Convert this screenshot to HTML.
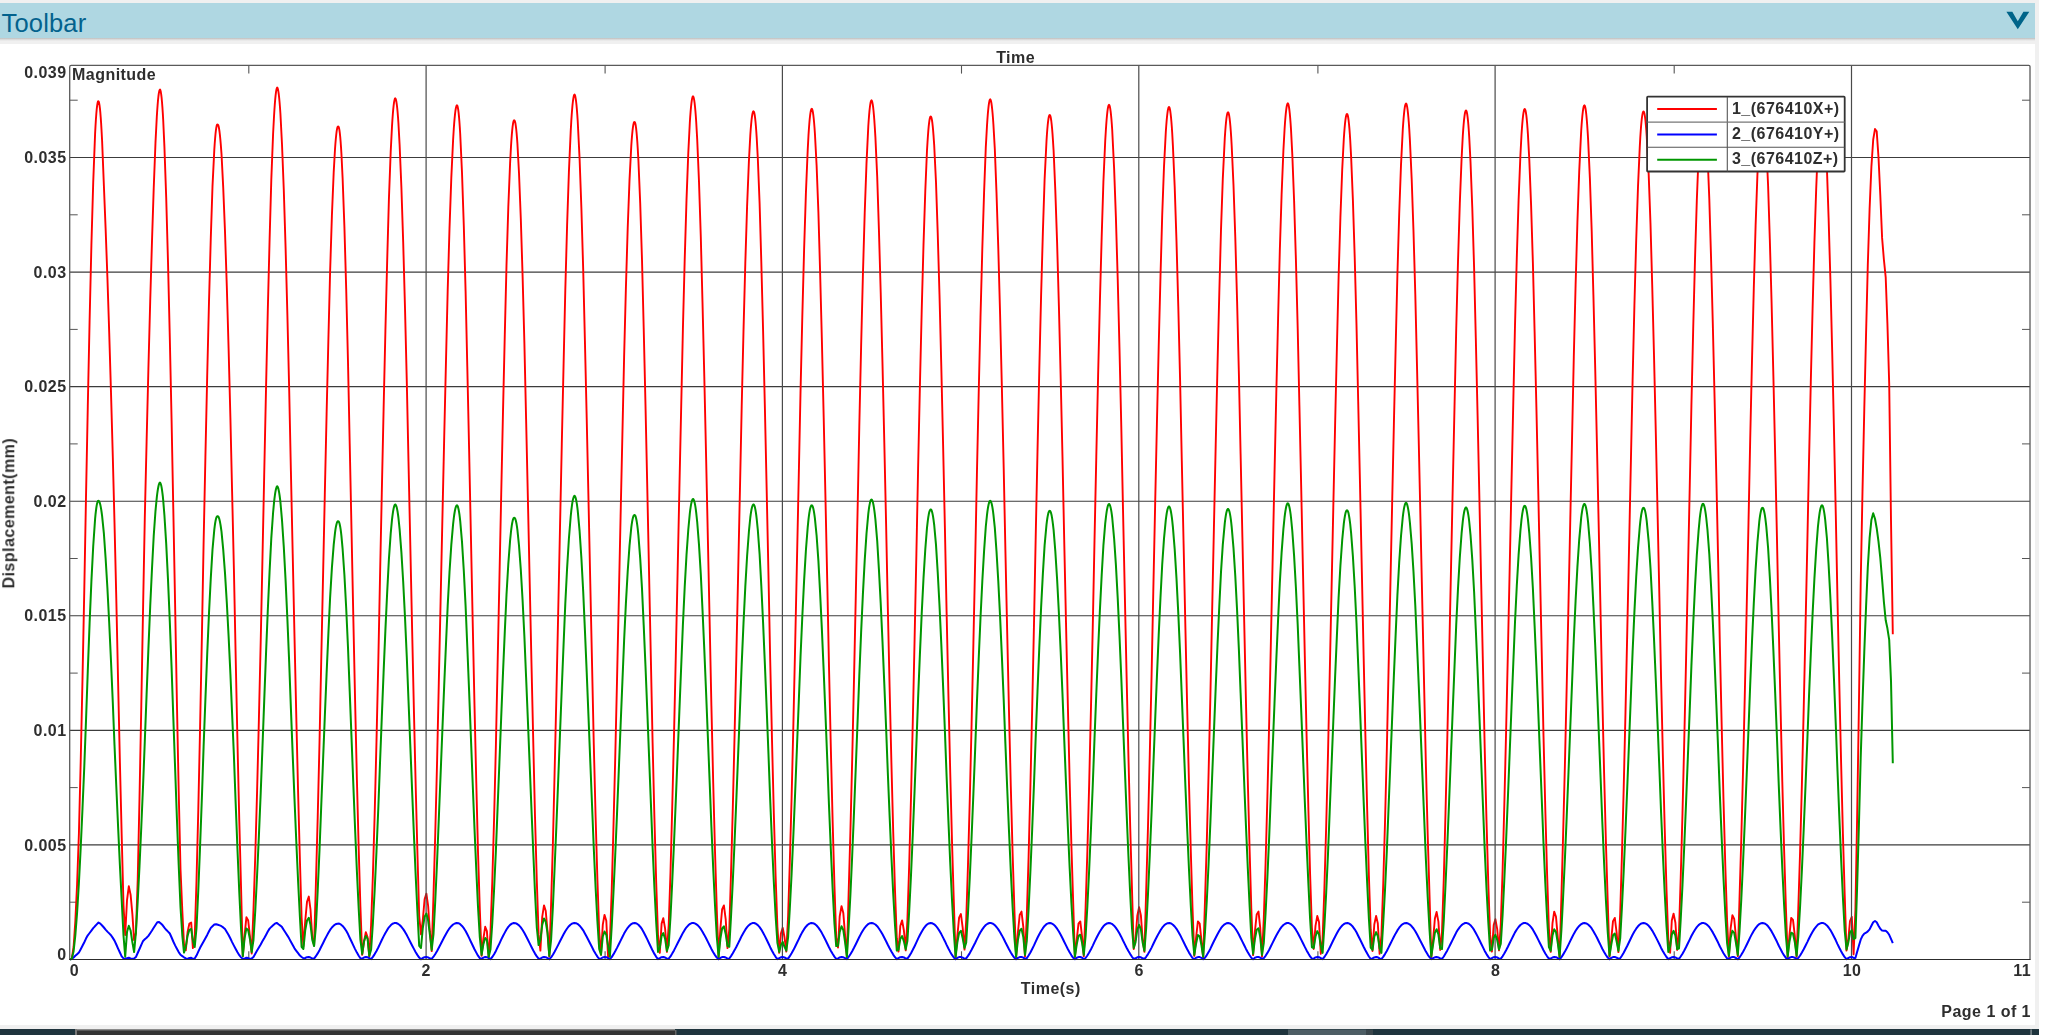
<!DOCTYPE html>
<html><head><meta charset="utf-8"><title>Chart</title>
<style>
html,body{margin:0;padding:0;background:#fff;}
body{width:2047px;height:1035px;overflow:hidden;position:relative;font-family:"Liberation Sans",sans-serif;}
#tb{position:absolute;left:0;top:3px;width:2035px;height:35.2px;background:#afd7e2;}
#sh{position:absolute;left:0;top:38.2px;width:2035px;height:2.6px;background:linear-gradient(#bdbdbd,#d9d9d9 45%,#f0f0f0);}
#tb span{position:absolute;left:1.6px;top:4.5px;font-size:25.5px;line-height:30px;color:#03628d;letter-spacing:0.15px;}
.g{position:absolute;background:#f0f0f0;}
svg{position:absolute;left:0;top:0;}
text{font-family:"Liberation Sans",sans-serif;font-weight:bold;font-size:16px;fill:#2e2e2e;letter-spacing:0.47px;}
</style></head><body>
<div class="g" style="left:0;top:0;width:2039px;height:3px"></div>
<div class="g" style="left:0;top:38.5px;width:2039px;height:5.5px"></div>
<div class="g" style="left:2035px;top:0;width:4px;height:1029px"></div>
<div class="g" style="left:0;top:1025px;width:2039px;height:4px"></div>
<div id="tb"><span>Toolbar</span></div><div id="sh"></div>
<svg width="2047" height="1035" viewBox="0 0 2047 1035">
<polygon points="2006.4,11.7 2012.3,11.7 2017.8,21.3 2023.4,11.7 2029.3,11.7 2017.8,29.3" fill="#006489"/>
<rect x="0" y="1029" width="2039" height="6" fill="#1f343d"/>
<rect x="77" y="1029" width="598" height="6" fill="#333"/>
<rect x="77" y="1029" width="598" height="1" fill="#8c8c8c"/>
<rect x="77" y="1030" width="598" height="1" fill="#595959"/>
<rect x="75" y="1029" width="2" height="6" fill="#777"/>
<rect x="675" y="1030" width="1.5" height="5" fill="#666"/>
<rect x="1288" y="1029.5" width="78" height="5.5" fill="#4d5d64"/>
<rect x="1366" y="1029.5" width="7" height="5.5" fill="#3a464b"/>
<rect x="2030.3" y="1029.5" width="1.6" height="5.5" fill="#7b878b"/>
<line x1="69.7" y1="844.9" x2="2030.0" y2="844.9" stroke="#3c3c3c" stroke-width="1.1"/>
<line x1="69.7" y1="730.4" x2="2030.0" y2="730.4" stroke="#3c3c3c" stroke-width="1.1"/>
<line x1="69.7" y1="615.8" x2="2030.0" y2="615.8" stroke="#3c3c3c" stroke-width="1.1"/>
<line x1="69.7" y1="501.2" x2="2030.0" y2="501.2" stroke="#3c3c3c" stroke-width="1.1"/>
<line x1="69.7" y1="386.6" x2="2030.0" y2="386.6" stroke="#3c3c3c" stroke-width="1.1"/>
<line x1="69.7" y1="272.1" x2="2030.0" y2="272.1" stroke="#3c3c3c" stroke-width="1.1"/>
<line x1="69.7" y1="157.5" x2="2030.0" y2="157.5" stroke="#3c3c3c" stroke-width="1.1"/>
<line x1="69.7" y1="902.2" x2="77.7" y2="902.2" stroke="#555" stroke-width="1"/>
<line x1="2022.0" y1="902.2" x2="2030.0" y2="902.2" stroke="#555" stroke-width="1"/>
<line x1="69.7" y1="787.6" x2="77.7" y2="787.6" stroke="#555" stroke-width="1"/>
<line x1="2022.0" y1="787.6" x2="2030.0" y2="787.6" stroke="#555" stroke-width="1"/>
<line x1="69.7" y1="673.1" x2="77.7" y2="673.1" stroke="#555" stroke-width="1"/>
<line x1="2022.0" y1="673.1" x2="2030.0" y2="673.1" stroke="#555" stroke-width="1"/>
<line x1="69.7" y1="558.5" x2="77.7" y2="558.5" stroke="#555" stroke-width="1"/>
<line x1="2022.0" y1="558.5" x2="2030.0" y2="558.5" stroke="#555" stroke-width="1"/>
<line x1="69.7" y1="443.9" x2="77.7" y2="443.9" stroke="#555" stroke-width="1"/>
<line x1="2022.0" y1="443.9" x2="2030.0" y2="443.9" stroke="#555" stroke-width="1"/>
<line x1="69.7" y1="329.4" x2="77.7" y2="329.4" stroke="#555" stroke-width="1"/>
<line x1="2022.0" y1="329.4" x2="2030.0" y2="329.4" stroke="#555" stroke-width="1"/>
<line x1="69.7" y1="214.8" x2="77.7" y2="214.8" stroke="#555" stroke-width="1"/>
<line x1="2022.0" y1="214.8" x2="2030.0" y2="214.8" stroke="#555" stroke-width="1"/>
<line x1="69.7" y1="100.2" x2="77.7" y2="100.2" stroke="#555" stroke-width="1"/>
<line x1="2022.0" y1="100.2" x2="2030.0" y2="100.2" stroke="#555" stroke-width="1"/>
<line x1="248.8" y1="65.4" x2="248.8" y2="73.60000000000001" stroke="#555" stroke-width="1.1"/>
<line x1="248.8" y1="951.3" x2="248.8" y2="959.5" stroke="#555" stroke-width="1.1"/>
<line x1="605.1" y1="65.4" x2="605.1" y2="73.60000000000001" stroke="#555" stroke-width="1.1"/>
<line x1="605.1" y1="951.3" x2="605.1" y2="959.5" stroke="#555" stroke-width="1.1"/>
<line x1="961.5" y1="65.4" x2="961.5" y2="73.60000000000001" stroke="#555" stroke-width="1.1"/>
<line x1="961.5" y1="951.3" x2="961.5" y2="959.5" stroke="#555" stroke-width="1.1"/>
<line x1="1317.9" y1="65.4" x2="1317.9" y2="73.60000000000001" stroke="#555" stroke-width="1.1"/>
<line x1="1317.9" y1="951.3" x2="1317.9" y2="959.5" stroke="#555" stroke-width="1.1"/>
<line x1="1674.2" y1="65.4" x2="1674.2" y2="73.60000000000001" stroke="#555" stroke-width="1.1"/>
<line x1="1674.2" y1="951.3" x2="1674.2" y2="959.5" stroke="#555" stroke-width="1.1"/>
<polyline fill="none" stroke="#ff0000" stroke-width="1.9" stroke-linejoin="round" points="70.0,959.5 71.8,958.7 73.6,946.7 75.3,921.6 77.1,884.1 78.9,833.8 80.7,761.7 82.5,679.0 84.3,589.3 86.0,496.9 87.8,406.0 89.6,320.7 91.4,245.2 93.2,182.9 95.1,133.6 95.5,126.1 95.9,119.5 96.3,114.0 96.7,109.4 97.1,105.8 97.5,103.3 97.9,101.7 98.3,101.2 98.7,101.6 99.1,102.9 99.5,105.1 99.9,108.2 100.3,112.2 100.7,117.1 101.1,122.9 101.5,129.6 102.1,140.7 103.9,186.0 105.6,228.1 107.4,277.3 109.2,332.4 111.0,392.6 112.8,456.5 114.5,522.8 116.3,598.7 118.1,682.3 119.9,762.3 121.7,836.0 123.5,905.2 125.2,935.0 127.0,900.3 128.8,886.3 130.6,894.7 132.4,914.4 134.1,940.1 135.9,933.1 137.7,880.1 139.5,798.5 141.3,705.8 143.1,606.4 144.8,517.7 146.6,441.8 148.4,369.1 150.2,301.5 152.0,240.9 153.7,188.9 155.5,142.3 156.8,116.9 157.2,110.6 157.6,105.1 158.0,100.4 158.4,96.5 158.8,93.5 159.2,91.3 159.6,90.0 160.0,89.5 160.4,90.2 160.8,91.8 161.2,94.3 161.6,97.7 162.0,102.0 162.4,107.1 162.8,113.1 163.2,120.0 164.4,146.4 166.2,197.5 168.0,262.1 169.8,337.6 171.6,421.0 173.3,509.1 175.1,604.3 176.9,701.9 178.7,791.6 180.5,869.3 182.3,910.6 184.0,944.2 185.8,950.3 187.6,931.9 189.4,923.5 191.2,922.6 192.9,948.1 194.7,937.2 196.5,881.0 198.3,809.7 200.1,726.7 201.9,635.9 203.6,542.9 205.4,457.3 207.2,375.8 209.0,301.6 210.8,237.6 212.5,186.2 214.3,149.9 214.7,143.8 215.1,138.5 215.5,134.0 215.9,130.4 216.3,127.6 216.7,125.7 217.1,124.7 217.5,124.5 217.9,124.6 218.3,125.3 218.7,126.7 219.1,128.8 219.5,131.5 219.9,134.8 220.3,138.8 220.7,143.4 221.5,153.9 223.2,187.1 225.0,231.6 226.8,286.0 228.6,348.7 230.4,417.8 232.1,491.4 233.9,568.9 235.7,658.2 237.5,743.5 239.3,821.3 241.1,889.6 242.8,956.1 244.6,935.2 246.4,917.3 248.2,920.5 250.0,937.0 251.7,953.5 253.5,909.0 255.3,854.8 257.1,790.9 258.9,719.2 260.7,641.9 262.4,561.6 264.2,474.8 266.0,389.7 267.8,310.3 269.6,239.5 271.3,179.9 273.1,133.8 274.0,116.7 274.4,110.1 274.8,104.4 275.2,99.4 275.6,95.4 276.0,92.1 276.4,89.7 276.8,88.2 277.2,87.5 277.6,88.1 278.0,89.5 278.4,91.6 278.8,94.5 279.2,98.1 279.6,102.5 280.0,107.5 280.4,113.3 282.0,144.2 283.8,190.3 285.6,248.1 287.4,315.5 289.2,390.6 290.9,470.9 292.7,553.8 294.5,636.7 296.3,717.1 298.1,792.2 299.9,859.8 301.6,917.8 303.4,946.1 305.2,921.3 307.0,901.8 308.8,896.6 310.5,909.5 312.3,937.4 314.1,945.1 315.9,883.9 317.7,817.6 319.5,742.8 321.2,662.2 323.0,578.5 324.8,494.8 326.6,414.0 328.4,338.9 330.1,272.1 331.9,215.9 333.7,172.3 335.0,149.3 335.4,143.8 335.8,139.0 336.2,135.0 336.6,131.7 337.0,129.2 337.4,127.5 337.8,126.6 338.2,126.5 338.6,126.8 339.0,127.9 339.4,129.9 339.8,132.9 340.2,136.7 340.6,141.3 341.0,146.9 341.4,153.3 342.6,177.8 344.4,226.6 346.2,289.0 348.0,362.3 349.7,443.5 351.5,529.4 353.3,616.4 355.1,700.9 356.9,779.5 358.7,849.0 360.4,906.6 362.2,954.9 364.0,942.0 365.8,932.1 367.6,937.3 369.3,956.8 371.1,925.0 372.9,875.1 374.7,813.0 376.5,741.1 378.3,661.7 380.0,578.0 381.8,492.8 383.6,409.5 385.4,330.9 387.2,260.1 388.9,199.6 390.7,151.8 392.0,126.4 392.4,120.0 392.8,114.5 393.2,109.7 393.6,105.8 394.0,102.7 394.4,100.4 394.8,98.9 395.2,98.3 395.6,98.7 396.0,99.9 396.4,101.8 396.8,104.5 397.2,107.9 397.6,112.1 398.0,117.0 398.4,122.7 399.6,144.5 401.4,187.5 403.2,242.6 405.0,308.1 406.8,382.0 408.5,461.7 410.3,544.8 412.1,628.4 413.9,709.9 415.7,786.6 417.5,856.0 419.2,915.8 421.0,934.3 422.8,920.0 424.6,899.4 426.4,893.6 428.1,905.6 429.9,931.7 431.7,951.1 433.5,895.2 435.3,832.3 437.1,760.8 438.8,682.9 440.6,601.3 442.4,518.6 444.2,437.4 446.0,360.4 447.7,290.1 449.5,228.6 451.3,178.1 453.1,140.0 453.8,128.5 454.2,123.1 454.6,118.3 455.0,114.3 455.4,111.0 455.8,108.5 456.2,106.7 456.6,105.6 457.0,105.3 457.4,105.8 457.8,107.3 458.2,109.5 458.6,112.7 459.0,116.7 459.4,121.5 459.8,127.2 460.2,133.7 462.0,172.6 463.8,225.8 465.6,291.4 467.3,366.8 469.1,449.2 470.9,535.3 472.7,621.9 474.5,705.7 476.3,783.3 478.0,852.0 479.8,909.1 481.6,955.8 483.4,938.6 485.2,926.8 486.9,931.1 488.7,957.8 490.5,931.7 492.3,881.2 494.1,818.2 495.9,745.2 497.6,664.8 499.4,580.3 501.2,494.9 503.0,411.8 504.8,334.3 506.5,265.3 508.3,207.5 510.1,163.1 511.0,146.4 511.4,140.3 511.8,134.9 512.2,130.4 512.6,126.7 513.0,123.8 513.4,121.8 513.8,120.6 514.2,120.3 514.6,120.5 515.0,121.5 515.4,123.2 515.8,125.8 516.2,129.0 516.6,133.1 517.0,137.9 517.4,143.4 519.0,173.0 520.8,218.5 522.6,276.1 524.4,343.6 526.1,418.9 527.9,499.4 529.7,582.2 531.5,664.5 533.3,743.6 535.0,816.5 536.8,880.9 538.6,934.4 540.4,950.6 542.2,917.2 544.0,905.4 545.7,910.7 547.5,931.1 549.3,956.6 551.1,904.0 552.9,843.5 554.6,773.0 556.4,695.2 558.2,612.5 560.0,527.8 561.8,443.9 563.6,363.8 565.3,290.2 567.1,225.5 568.9,172.1 570.7,131.6 571.3,120.9 571.7,114.9 572.1,109.7 572.5,105.2 572.9,101.5 573.3,98.6 573.7,96.4 574.1,95.1 574.5,94.5 574.9,95.1 575.3,96.4 575.7,98.6 576.1,101.5 576.5,105.2 576.9,109.7 577.3,114.9 577.7,120.8 579.6,158.9 581.4,208.5 583.2,269.6 584.9,340.3 586.7,418.0 588.5,500.1 590.3,583.8 592.1,666.4 593.8,744.9 595.6,816.8 597.4,879.6 599.2,931.2 601.0,954.8 602.8,924.6 604.5,914.9 606.3,920.8 608.1,957.1 609.9,940.8 611.7,891.1 613.4,829.8 615.2,759.0 617.0,681.2 618.8,599.2 620.6,516.0 622.4,434.5 624.1,357.6 625.9,288.1 627.7,228.3 629.5,180.4 631.3,145.6 631.7,139.9 632.1,135.0 632.5,130.9 632.9,127.6 633.3,125.0 633.7,123.2 634.1,122.2 634.5,122.0 634.9,122.3 635.3,123.4 635.7,125.3 636.1,128.1 636.5,131.8 636.9,136.3 637.3,141.6 637.7,147.7 638.4,160.3 640.2,203.1 642.0,259.7 643.7,328.1 645.5,405.4 647.3,488.8 649.1,575.0 650.9,660.7 652.6,742.6 654.4,817.5 656.2,882.6 658.0,935.2 659.8,952.9 661.6,923.6 663.3,918.1 665.1,928.6 666.9,951.9 668.7,925.1 670.5,872.3 672.2,808.3 674.0,735.4 675.8,655.9 677.6,572.7 679.4,488.6 681.2,406.5 682.9,329.3 684.7,259.7 686.5,200.1 688.3,152.6 689.8,123.0 690.2,116.9 690.6,111.6 691.0,107.1 691.4,103.4 691.8,100.4 692.2,98.2 692.6,96.9 693.0,96.3 693.4,96.8 693.8,98.1 694.2,100.1 694.6,102.9 695.0,106.5 695.4,110.8 695.8,115.9 696.2,121.8 697.2,139.4 699.0,181.9 700.8,236.9 702.5,302.5 704.3,376.7 706.1,456.9 707.9,540.3 709.7,624.3 711.4,705.9 713.2,782.4 715.0,851.3 716.8,910.2 718.6,957.1 720.4,928.3 722.1,909.5 723.9,905.4 725.7,919.3 727.5,948.1 729.3,929.1 731.0,874.0 732.8,808.3 734.6,734.0 736.4,653.9 738.2,570.7 740.0,487.2 741.7,406.4 743.5,330.9 745.3,263.5 747.1,206.3 748.9,161.4 750.3,135.2 750.7,129.5 751.1,124.6 751.5,120.5 751.9,117.1 752.3,114.5 752.7,112.7 753.1,111.6 753.5,111.3 753.9,111.7 754.3,112.9 754.7,115.0 755.1,117.9 755.5,121.6 755.9,126.2 756.3,131.5 756.7,137.6 757.8,158.0 759.6,203.3 761.3,261.7 763.1,330.9 764.9,408.3 766.7,491.0 768.5,575.9 770.2,659.9 772.0,739.8 773.8,812.7 775.6,875.8 777.4,926.8 779.2,952.9 780.9,933.5 782.7,927.8 784.5,937.3 786.3,951.6 788.1,916.4 789.8,862.8 791.6,797.8 793.4,723.6 795.2,643.0 797.0,559.0 798.8,474.6 800.5,392.9 802.3,317.1 804.1,249.7 805.9,193.4 807.7,150.3 808.5,135.1 808.9,129.0 809.3,123.7 809.7,119.2 810.1,115.5 810.5,112.6 810.9,110.5 811.3,109.2 811.7,108.8 812.1,109.1 812.5,110.3 812.9,112.2 813.3,114.8 813.7,118.3 814.1,122.5 814.5,127.5 814.9,133.2 816.6,165.2 818.4,212.4 820.1,271.7 821.9,340.9 823.7,417.8 825.5,499.7 827.3,583.7 829.0,667.0 830.8,746.6 832.6,819.9 834.4,884.1 836.2,937.2 838.0,947.6 839.7,916.4 841.5,906.1 843.3,912.9 845.1,935.5 846.9,957.1 848.6,894.9 850.4,831.9 852.2,759.3 854.0,679.5 855.8,595.5 857.6,510.1 859.3,426.4 861.1,347.2 862.9,275.3 864.7,213.3 866.5,163.4 868.3,126.3 868.7,120.3 869.1,115.1 869.5,110.6 869.9,107.0 870.3,104.1 870.7,102.0 871.1,100.8 871.5,100.3 871.9,100.8 872.3,102.1 872.7,104.1 873.1,106.9 873.5,110.5 873.9,114.8 874.3,119.9 874.7,125.7 875.4,137.1 877.2,176.8 878.9,229.1 880.7,292.2 882.5,364.1 884.3,442.2 886.1,523.9 887.8,606.4 889.6,686.9 891.4,762.8 893.2,831.5 895.0,890.6 896.8,938.2 898.5,951.6 900.3,926.0 902.1,920.4 903.9,930.5 905.7,950.4 907.4,920.3 909.2,864.8 911.0,797.7 912.8,721.5 914.6,639.2 916.4,553.7 918.1,468.4 919.9,386.5 921.7,311.1 923.5,245.0 925.3,190.7 927.0,150.2 927.5,142.3 927.9,136.2 928.3,130.9 928.7,126.4 929.1,122.8 929.5,120.0 929.9,118.0 930.3,116.8 930.7,116.5 931.1,116.8 931.5,117.9 931.9,119.7 932.3,122.4 932.7,125.9 933.1,130.1 933.5,135.1 933.9,140.9 934.2,145.3 936.0,182.2 937.7,232.6 939.5,294.8 941.3,366.4 943.1,445.0 944.9,527.8 946.6,611.8 948.4,693.9 950.2,771.4 952.0,841.3 953.8,901.2 955.6,957.1 957.3,936.3 959.1,917.7 960.9,914.0 962.7,927.9 964.5,949.6 966.2,920.3 968.0,865.0 969.8,798.8 971.6,724.0 973.4,643.2 975.2,559.1 976.9,474.9 978.7,393.3 980.5,317.2 982.3,249.3 984.1,191.9 985.8,147.1 987.0,125.6 987.4,119.6 987.8,114.3 988.2,109.8 988.6,106.2 989.0,103.2 989.4,101.1 989.8,99.8 990.2,99.3 990.6,99.8 991.0,101.0 991.4,103.0 991.8,105.8 992.2,109.3 992.6,113.5 993.0,118.5 993.4,124.2 994.8,148.8 996.5,192.8 998.3,248.8 1000.1,314.8 1001.9,388.7 1003.7,468.1 1005.4,550.2 1007.2,632.4 1009.0,712.0 1010.8,786.4 1012.6,853.0 1014.4,909.7 1016.1,957.1 1017.9,932.5 1019.7,915.0 1021.5,911.6 1023.3,926.8 1025.0,956.6 1026.8,915.9 1028.6,856.7 1030.4,786.5 1032.2,707.7 1034.0,623.5 1035.7,536.9 1037.5,451.3 1039.3,369.8 1041.1,295.6 1042.9,231.4 1044.6,179.6 1046.5,141.0 1046.9,134.8 1047.3,129.5 1047.7,125.0 1048.1,121.3 1048.5,118.5 1048.9,116.5 1049.3,115.3 1049.7,115.0 1050.1,115.3 1050.5,116.4 1050.9,118.3 1051.3,121.0 1051.7,124.5 1052.1,128.7 1052.5,133.7 1052.9,139.5 1053.6,150.5 1055.3,190.1 1057.1,242.6 1058.9,306.3 1060.7,378.7 1062.5,457.5 1064.2,539.7 1066.0,622.5 1067.8,703.0 1069.6,778.3 1071.4,845.7 1073.2,903.0 1074.9,957.1 1076.7,939.9 1078.5,923.7 1080.3,921.4 1082.1,937.2 1083.8,956.1 1085.6,907.6 1087.4,850.6 1089.2,782.9 1091.0,706.8 1092.8,625.0 1094.5,540.7 1096.3,456.6 1098.1,376.0 1099.9,301.6 1101.7,236.1 1103.4,182.0 1105.2,141.2 1105.8,131.2 1106.2,125.1 1106.6,119.8 1107.0,115.3 1107.4,111.6 1107.8,108.7 1108.2,106.6 1108.6,105.3 1109.0,104.8 1109.4,105.2 1109.8,106.4 1110.2,108.4 1110.6,111.1 1111.0,114.6 1111.4,118.9 1111.8,124.0 1112.2,129.8 1114.1,168.1 1115.9,217.4 1117.7,278.5 1119.5,349.1 1121.3,426.9 1123.0,509.3 1124.8,593.4 1126.6,676.2 1128.4,755.0 1130.2,827.1 1132.0,889.9 1133.7,949.0 1135.5,939.4 1137.3,915.7 1139.1,907.3 1140.9,915.5 1142.6,939.1 1144.4,951.9 1146.2,889.8 1148.0,826.5 1149.8,753.9 1151.6,674.6 1153.3,591.3 1155.1,506.8 1156.9,424.2 1158.7,346.4 1160.5,275.9 1162.2,215.4 1164.0,166.8 1165.8,132.0 1166.2,126.2 1166.6,121.1 1167.0,116.8 1167.4,113.3 1167.8,110.5 1168.2,108.6 1168.6,107.4 1169.0,107.0 1169.4,107.4 1169.8,108.7 1170.2,110.7 1170.6,113.6 1171.0,117.2 1171.4,121.6 1171.8,126.8 1172.2,132.7 1172.9,145.6 1174.7,186.9 1176.5,241.2 1178.3,306.6 1180.1,380.6 1181.8,460.8 1183.6,544.1 1185.4,627.7 1187.2,708.7 1189.0,784.0 1190.8,851.2 1192.5,907.7 1194.3,955.9 1196.1,937.5 1197.9,921.4 1199.7,923.6 1201.4,940.0 1203.2,957.8 1205.0,900.9 1206.8,842.1 1208.6,772.8 1210.4,695.5 1212.1,613.2 1213.9,528.6 1215.7,445.1 1217.5,365.5 1219.3,292.9 1221.0,229.8 1222.8,178.6 1224.8,137.9 1225.2,132.0 1225.6,126.7 1226.0,122.3 1226.4,118.7 1226.8,115.9 1227.2,113.9 1227.6,112.7 1228.0,112.3 1228.4,112.6 1228.8,113.8 1229.2,115.7 1229.6,118.4 1230.0,121.9 1230.4,126.2 1230.8,131.3 1231.2,137.1 1231.7,146.0 1233.5,185.2 1235.3,237.7 1237.1,301.5 1238.9,374.5 1240.6,454.0 1242.4,537.4 1244.2,621.5 1246.0,703.5 1247.8,780.4 1249.6,849.5 1251.3,908.4 1253.1,955.1 1254.9,931.7 1256.7,914.4 1258.5,911.6 1260.2,927.5 1262.0,956.6 1263.8,918.6 1265.6,862.7 1267.4,796.3 1269.2,721.5 1270.9,641.0 1272.7,557.6 1274.5,474.1 1276.3,393.4 1278.1,318.2 1279.8,251.2 1281.6,194.7 1283.4,150.5 1284.6,128.7 1285.0,122.8 1285.4,117.7 1285.8,113.4 1286.2,109.8 1286.6,107.0 1287.0,105.0 1287.4,103.8 1287.8,103.3 1288.2,103.8 1288.6,105.1 1289.0,107.1 1289.4,110.0 1289.8,113.7 1290.2,118.2 1290.6,123.4 1291.0,129.4 1292.3,154.5 1294.1,200.7 1295.9,259.3 1297.7,328.3 1299.4,405.3 1301.2,487.5 1303.0,572.0 1304.8,655.8 1306.6,736.0 1308.4,809.7 1310.1,874.3 1311.9,927.6 1313.7,949.0 1315.5,925.9 1317.3,915.9 1319.0,921.9 1320.8,953.9 1322.6,938.7 1324.4,888.3 1326.2,826.0 1328.0,754.1 1329.7,675.2 1331.5,592.0 1333.3,507.7 1335.1,425.3 1336.9,347.6 1338.6,277.6 1340.4,217.6 1342.2,169.9 1343.8,139.0 1344.2,133.1 1344.6,128.0 1345.0,123.7 1345.4,120.2 1345.8,117.4 1346.2,115.5 1346.6,114.3 1347.0,114.0 1347.4,114.3 1347.8,115.5 1348.2,117.5 1348.6,120.3 1349.0,124.0 1349.4,128.4 1349.8,133.7 1350.2,139.7 1351.1,156.4 1352.9,200.1 1354.7,257.0 1356.5,325.1 1358.2,401.8 1360.0,484.3 1361.8,569.5 1363.6,654.4 1365.4,735.7 1367.2,810.5 1368.9,876.0 1370.7,929.7 1372.5,951.0 1374.3,924.5 1376.1,915.9 1377.8,923.3 1379.6,953.9 1381.4,935.7 1383.2,885.0 1385.0,822.8 1386.8,751.1 1388.5,672.6 1390.3,589.8 1392.1,505.8 1393.9,423.4 1395.7,345.6 1397.4,274.9 1399.2,214.0 1401.0,165.0 1402.8,129.3 1403.2,123.4 1403.6,118.2 1404.0,113.8 1404.4,110.1 1404.8,107.3 1405.2,105.2 1405.6,104.0 1406.0,103.5 1406.4,103.9 1406.8,105.1 1407.2,107.1 1407.6,109.8 1408.0,113.3 1408.4,117.5 1408.8,122.4 1409.2,128.1 1409.9,140.1 1411.7,179.5 1413.5,231.5 1415.3,294.4 1417.0,366.0 1418.8,444.0 1420.6,525.7 1422.4,608.3 1424.2,689.2 1425.9,765.6 1427.7,835.0 1429.5,894.9 1431.3,957.4 1433.1,939.9 1434.9,918.5 1436.6,912.0 1438.4,921.6 1440.2,950.0 1442.0,931.8 1443.8,878.2 1445.5,813.1 1447.3,738.8 1449.1,658.2 1450.9,573.9 1452.7,489.2 1454.5,406.9 1456.2,330.1 1458.0,261.6 1459.8,203.6 1461.6,158.5 1462.8,135.8 1463.2,129.9 1463.6,124.7 1464.0,120.4 1464.4,116.8 1464.8,114.0 1465.2,112.0 1465.6,110.9 1466.0,110.5 1466.4,110.9 1466.8,112.1 1467.2,114.2 1467.6,117.1 1468.0,120.7 1468.4,125.2 1468.8,130.5 1469.2,136.6 1470.5,161.6 1472.3,208.3 1474.1,267.7 1475.8,337.7 1477.6,415.7 1479.4,498.7 1481.2,583.9 1483.0,668.0 1484.7,747.9 1486.5,820.8 1488.3,883.9 1490.1,934.9 1491.9,951.6 1493.7,925.1 1495.4,919.2 1497.2,929.2 1499.0,950.4 1500.8,924.0 1502.6,870.5 1504.3,805.6 1506.1,731.7 1507.9,651.4 1509.7,567.7 1511.5,483.4 1513.3,401.7 1515.0,325.4 1516.8,257.4 1518.6,200.1 1520.4,155.5 1521.5,134.8 1521.9,128.8 1522.3,123.6 1522.7,119.2 1523.1,115.5 1523.5,112.7 1523.9,110.6 1524.3,109.4 1524.7,109.0 1525.1,109.4 1525.5,110.5 1525.9,112.5 1526.3,115.2 1526.7,118.7 1527.1,123.0 1527.5,128.1 1527.9,133.9 1529.3,159.9 1531.1,205.4 1532.9,263.3 1534.6,331.4 1536.4,407.5 1538.2,488.8 1540.0,572.6 1541.8,655.9 1543.5,735.8 1545.3,809.5 1547.1,874.4 1548.9,928.3 1550.7,951.9 1552.5,923.2 1554.2,911.6 1556.0,916.8 1557.8,937.4 1559.6,957.8 1561.4,897.0 1563.1,835.8 1564.9,764.9 1566.7,686.6 1568.5,603.7 1570.3,519.2 1572.1,436.0 1573.8,357.0 1575.6,285.1 1577.4,222.6 1579.2,171.9 1581.0,134.6 1581.2,130.8 1581.6,124.9 1582.0,119.8 1582.4,115.4 1582.8,111.8 1583.2,109.0 1583.6,106.9 1584.0,105.7 1584.4,105.3 1584.8,105.7 1585.2,107.0 1585.6,109.0 1586.0,111.8 1586.4,115.5 1586.8,119.9 1587.2,125.0 1587.6,131.0 1588.1,139.3 1589.9,178.6 1591.7,231.1 1593.4,294.9 1595.2,367.9 1597.0,447.3 1598.8,530.4 1600.6,614.4 1602.3,696.1 1604.1,772.9 1605.9,841.8 1607.7,900.7 1609.5,956.6 1611.3,938.9 1613.0,921.1 1614.8,917.9 1616.6,932.5 1618.4,952.1 1620.2,913.3 1621.9,856.3 1623.7,788.4 1625.5,712.1 1627.3,630.0 1629.1,545.3 1630.9,461.0 1632.6,380.2 1634.4,305.7 1636.2,240.4 1638.0,186.7 1639.8,146.4 1640.3,137.2 1640.7,131.2 1641.1,125.9 1641.5,121.5 1641.9,117.9 1642.3,115.1 1642.7,113.1 1643.1,111.9 1643.5,111.5 1643.9,111.8 1644.3,113.0 1644.7,114.9 1645.1,117.6 1645.5,121.0 1645.9,125.3 1646.3,130.2 1646.7,136.0 1648.7,174.9 1650.5,224.1 1652.2,284.9 1654.0,355.2 1655.8,432.6 1657.6,514.3 1659.4,597.6 1661.1,679.5 1662.9,757.3 1664.7,828.1 1666.5,889.6 1668.3,939.6 1670.1,952.9 1671.8,920.5 1673.6,913.6 1675.4,922.8 1677.2,950.0 1679.0,931.4 1680.7,878.1 1682.5,813.2 1684.3,739.0 1686.1,658.3 1687.9,573.9 1689.7,488.8 1691.4,406.1 1693.2,328.8 1695.0,259.5 1696.8,200.9 1698.6,155.0 1699.8,131.5 1700.2,125.4 1700.6,120.2 1701.0,115.7 1701.4,112.0 1701.8,109.1 1702.2,107.0 1702.6,105.7 1703.0,105.3 1703.4,105.7 1703.8,107.0 1704.2,109.0 1704.6,111.7 1705.0,115.3 1705.4,119.6 1705.8,124.7 1706.2,130.6 1707.5,154.1 1709.3,198.9 1711.0,256.0 1712.8,323.5 1714.6,398.9 1716.4,479.8 1718.2,563.2 1719.9,646.4 1721.7,726.3 1723.5,800.3 1725.3,865.8 1727.1,920.5 1728.9,956.9 1730.6,928.7 1732.4,915.1 1734.2,918.8 1736.0,937.6 1737.8,956.1 1739.5,899.2 1741.3,838.8 1743.1,768.3 1744.9,690.2 1746.7,607.4 1748.5,522.8 1750.2,439.4 1752.0,360.3 1753.8,288.3 1755.6,225.9 1757.4,175.4 1759.3,136.2 1759.7,130.2 1760.1,125.1 1760.5,120.7 1760.9,117.1 1761.3,114.3 1761.7,112.3 1762.1,111.2 1762.5,110.8 1762.9,111.2 1763.3,112.4 1763.7,114.3 1764.1,117.1 1764.5,120.7 1764.9,125.0 1765.3,130.2 1765.7,136.1 1766.3,145.8 1768.1,185.7 1769.8,238.8 1771.6,303.2 1773.4,376.7 1775.2,456.5 1777.0,539.9 1778.7,623.9 1780.5,705.5 1782.3,781.7 1784.1,849.8 1785.9,907.5 1787.7,957.1 1789.4,935.5 1791.2,917.9 1793.0,919.9 1794.8,935.5 1796.6,956.9 1798.3,908.5 1800.1,851.6 1801.9,784.4 1803.7,709.0 1805.5,628.3 1807.3,545.0 1809.0,461.9 1810.8,382.1 1812.6,308.3 1814.4,243.0 1816.2,188.7 1817.9,147.0 1818.8,132.1 1819.2,126.2 1819.6,121.1 1820.0,116.8 1820.4,113.2 1820.8,110.4 1821.2,108.4 1821.6,107.2 1822.0,106.8 1822.4,107.4 1822.8,108.8 1823.2,111.0 1823.6,114.0 1824.0,117.9 1824.4,122.5 1824.8,127.9 1825.2,134.2 1826.9,167.9 1828.6,217.8 1830.4,279.9 1832.2,351.9 1834.0,431.2 1835.8,515.0 1837.5,600.2 1839.3,683.7 1841.1,762.5 1842.9,833.7 1844.7,894.9 1846.5,950.6 1848.2,940.5 1850.0,921.0 1851.8,916.8 1853.6,954.4 1855.4,910.2 1857.1,819.2 1858.9,707.1 1860.7,583.2 1862.5,491.2 1864.3,408.8 1866.1,332.4 1867.8,264.9 1869.6,209.0 1871.4,166.7 1873.2,139.7 1875.0,129.0 1876.7,131.4 1878.5,157.2 1880.3,195.2 1882.1,237.9 1883.9,259.7 1885.7,277.3 1887.4,323.1 1889.2,383.9 1891.0,520.5 1892.8,634.2"/>
<line x1="426.1" y1="65.4" x2="426.1" y2="959.5" stroke="#4a4a4a" stroke-width="1.2"/>
<line x1="782.4" y1="65.4" x2="782.4" y2="959.5" stroke="#4a4a4a" stroke-width="1.2"/>
<line x1="1138.8" y1="65.4" x2="1138.8" y2="959.5" stroke="#4a4a4a" stroke-width="1.2"/>
<line x1="1495.1" y1="65.4" x2="1495.1" y2="959.5" stroke="#4a4a4a" stroke-width="1.2"/>
<line x1="1851.5" y1="65.4" x2="1851.5" y2="959.5" stroke="#4a4a4a" stroke-width="1.2"/>
<polyline fill="none" stroke="#0000ff" stroke-width="2.0" stroke-linejoin="round" points="70.0,959.2 71.8,958.9 73.6,957.5 75.3,955.8 77.1,954.2 78.9,952.6 80.7,949.2 82.5,945.7 84.3,942.2 86.0,938.6 87.8,935.3 89.6,933.0 91.4,930.6 93.2,928.2 94.9,926.3 96.7,924.4 98.5,922.5 100.3,923.6 102.1,925.5 103.9,927.5 105.6,929.6 107.4,931.6 109.2,933.4 111.0,935.2 112.8,937.9 114.5,940.6 116.3,944.5 118.1,948.6 119.9,952.5 121.7,956.4 123.5,958.4 125.2,958.7 127.0,958.2 128.8,957.7 130.6,958.4 132.4,958.7 134.1,958.6 135.9,957.1 137.7,953.0 139.5,949.0 141.3,944.8 143.1,940.9 144.8,939.3 146.6,937.7 148.4,935.9 150.2,933.2 152.0,930.5 153.7,927.8 155.5,925.0 157.3,922.3 159.1,922.1 160.9,923.5 162.7,925.3 164.4,927.6 166.2,929.8 168.0,931.6 169.8,933.5 171.6,937.5 173.3,941.5 175.1,945.4 176.9,948.8 178.7,952.1 180.5,954.8 182.3,956.1 184.0,957.3 185.8,958.4 187.6,958.9 189.4,958.0 191.2,957.8 192.9,958.9 194.7,958.6 196.5,955.6 198.3,951.7 200.1,947.8 201.9,944.5 203.6,941.4 205.4,938.2 207.2,934.9 209.0,931.3 210.8,927.9 212.5,926.2 214.3,924.5 216.1,924.2 217.9,924.8 219.7,925.4 221.5,926.2 223.2,927.4 225.0,929.0 226.8,932.0 228.6,935.0 230.4,938.5 232.1,942.1 233.9,945.6 235.7,949.0 237.5,952.3 239.3,955.2 241.1,957.5 242.8,958.6 244.6,958.7 246.4,957.7 248.2,958.1 250.0,958.9 251.7,958.6 253.5,956.9 255.3,953.8 257.1,950.6 258.9,947.5 260.7,944.4 262.4,941.3 264.2,938.2 266.0,934.9 267.8,931.5 269.6,928.6 271.3,926.9 273.1,925.3 274.9,923.7 276.7,922.9 278.5,924.3 280.3,925.6 282.0,927.1 283.8,930.0 285.6,932.8 287.4,935.6 289.2,938.6 290.9,941.8 292.7,945.1 294.5,948.3 296.3,950.8 298.1,953.2 299.9,955.6 301.6,957.0 303.4,958.3 305.2,958.0 307.0,957.2 308.8,957.0 310.5,957.5 312.3,958.6 314.1,958.6 315.9,956.2 317.7,953.4 319.5,950.2 321.2,946.8 323.0,943.2 324.8,939.5 326.6,936.1 328.4,932.8 330.1,929.9 331.9,927.5 333.7,925.6 335.5,924.3 337.3,923.7 339.1,923.6 340.8,924.4 342.6,925.9 344.4,928.1 346.2,930.8 348.0,934.1 349.7,937.7 351.5,941.5 353.3,945.4 355.1,949.1 356.9,952.6 358.7,955.7 360.4,958.3 362.2,958.7 364.0,957.5 365.8,957.0 367.6,957.3 369.3,958.2 371.1,959.1 372.9,956.9 374.7,954.1 376.5,951.0 378.3,947.5 380.0,943.8 381.8,940.0 383.6,936.4 385.4,933.0 387.2,929.9 388.9,927.3 390.7,925.3 392.5,923.8 394.3,923.1 396.1,923.0 397.9,923.7 399.6,925.0 401.4,926.8 403.2,929.1 405.0,931.9 406.8,935.1 408.5,938.4 410.3,942.0 412.1,945.5 413.9,948.9 415.7,952.2 417.5,955.1 419.2,957.6 421.0,959.2 422.8,958.0 424.6,957.2 426.4,957.0 428.1,957.4 429.9,958.5 431.7,958.8 433.5,956.7 435.3,954.0 437.1,951.0 438.8,947.7 440.6,944.3 442.4,940.7 444.2,937.3 446.0,934.0 447.7,931.0 449.5,928.3 451.3,926.2 453.1,924.5 454.9,923.5 456.7,923.0 458.4,923.2 460.2,924.2 462.0,925.9 463.8,928.2 465.6,931.0 467.3,934.3 469.1,937.9 470.9,941.7 472.7,945.5 474.5,949.2 476.3,952.6 478.0,955.7 479.8,958.2 481.6,958.8 483.4,957.6 485.2,957.0 486.9,957.2 488.7,958.1 490.5,959.2 492.3,957.0 494.1,954.2 495.9,950.9 497.6,947.3 499.4,943.6 501.2,939.7 503.0,936.0 504.8,932.6 506.5,929.5 508.3,926.9 510.1,924.9 511.9,923.6 513.7,923.0 515.5,923.2 517.2,924.0 519.0,925.4 520.8,927.4 522.6,930.0 524.4,933.0 526.1,936.3 527.9,939.8 529.7,943.4 531.5,947.0 533.3,950.5 535.0,953.6 536.8,956.4 538.6,958.7 540.4,958.6 542.2,957.5 544.0,957.0 545.7,957.2 547.5,958.1 549.3,959.2 551.1,957.4 552.9,954.8 554.6,951.8 556.4,948.4 558.2,944.9 560.0,941.3 561.8,937.7 563.6,934.3 565.3,931.2 567.1,928.5 568.9,926.2 570.7,924.5 572.5,923.4 574.2,923.0 576.0,923.2 577.8,924.1 579.6,925.7 581.4,927.8 583.2,930.3 584.9,933.4 586.7,936.7 588.5,940.2 590.3,943.8 592.1,947.3 593.8,950.7 595.6,953.8 597.4,956.6 599.2,958.8 601.0,958.5 602.8,957.4 604.5,957.0 606.3,957.2 608.1,958.2 609.9,959.2 611.7,957.1 613.4,954.4 615.2,951.3 617.0,947.9 618.8,944.3 620.6,940.6 622.4,937.0 624.1,933.6 625.9,930.5 627.7,927.8 629.5,925.7 631.3,924.1 633.0,923.2 634.8,923.0 636.6,923.5 638.4,924.8 640.2,926.7 642.0,929.2 643.7,932.3 645.5,935.7 647.3,939.4 649.1,943.2 650.9,947.0 652.6,950.6 654.4,953.9 656.2,956.8 658.0,959.1 659.8,958.2 661.6,957.2 663.3,957.0 665.1,957.5 666.9,958.6 668.7,958.7 670.5,956.4 672.2,953.6 674.0,950.4 675.8,946.9 677.6,943.3 679.4,939.7 681.2,936.2 682.9,932.9 684.7,929.9 686.5,927.3 688.3,925.3 690.1,923.9 691.8,923.1 693.6,923.0 695.4,923.6 697.2,924.8 699.0,926.6 700.8,928.9 702.5,931.7 704.3,934.9 706.1,938.3 707.9,941.9 709.7,945.5 711.4,948.9 713.2,952.2 715.0,955.1 716.8,957.6 718.6,959.2 720.4,957.9 722.1,957.1 723.9,957.0 725.7,957.5 727.5,958.7 729.3,958.5 731.0,956.1 732.8,953.3 734.6,950.1 736.4,946.7 738.2,943.1 740.0,939.5 741.7,935.9 743.5,932.7 745.3,929.7 747.1,927.2 748.9,925.2 750.6,923.9 752.4,923.1 754.2,923.0 756.0,923.7 757.8,925.1 759.6,927.1 761.3,929.6 763.1,932.7 764.9,936.1 766.7,939.7 768.5,943.5 770.2,947.2 772.0,950.8 773.8,954.0 775.6,956.8 777.4,959.1 779.2,958.2 780.9,957.3 782.7,957.0 784.5,957.4 786.3,958.6 788.1,958.6 789.8,956.2 791.6,953.3 793.4,950.1 795.2,946.5 797.0,942.8 798.8,939.1 800.5,935.5 802.3,932.1 804.1,929.2 805.9,926.7 807.7,924.8 809.4,923.6 811.2,923.0 813.0,923.2 814.8,924.0 816.6,925.5 818.4,927.6 820.1,930.1 821.9,933.1 823.7,936.5 825.5,940.0 827.3,943.7 829.0,947.3 830.8,950.7 832.6,953.8 834.4,956.6 836.2,958.8 838.0,958.5 839.7,957.4 841.5,957.0 843.3,957.3 845.1,958.2 846.9,959.2 848.6,957.0 850.4,954.3 852.2,951.2 854.0,947.8 855.8,944.2 857.6,940.5 859.3,937.0 861.1,933.6 862.9,930.5 864.7,927.8 866.5,925.7 868.2,924.1 870.0,923.2 871.8,923.0 873.6,923.5 875.4,924.5 877.2,926.2 878.9,928.5 880.7,931.2 882.5,934.3 884.3,937.7 886.1,941.2 887.8,944.8 889.6,948.3 891.4,951.6 893.2,954.6 895.0,957.2 896.8,959.2 898.5,958.1 900.3,957.2 902.1,957.0 903.9,957.4 905.7,958.6 907.4,958.6 909.2,956.1 911.0,953.2 912.8,949.8 914.6,946.2 916.4,942.4 918.1,938.6 919.9,935.0 921.7,931.7 923.5,928.7 925.3,926.3 927.0,924.5 928.8,923.4 930.6,923.0 932.4,923.3 934.2,924.3 936.0,926.0 937.7,928.2 939.5,930.9 941.3,934.1 943.1,937.6 944.9,941.2 946.6,944.9 948.4,948.5 950.2,951.9 952.0,954.9 953.8,957.5 955.6,959.2 957.3,957.9 959.1,957.1 960.9,957.0 962.7,957.6 964.5,958.8 966.2,958.3 968.0,955.9 969.8,953.1 971.6,949.8 973.4,946.3 975.2,942.7 976.9,939.1 978.7,935.6 980.5,932.3 982.3,929.4 984.1,926.9 985.8,925.0 987.6,923.7 989.4,923.0 991.2,923.1 993.0,923.8 994.8,925.1 996.5,927.0 998.3,929.4 1000.1,932.2 1001.9,935.4 1003.7,938.8 1005.4,942.3 1007.2,945.8 1009.0,949.3 1010.8,952.5 1012.6,955.4 1014.4,957.8 1016.1,959.2 1017.9,957.9 1019.7,957.1 1021.5,957.0 1023.3,957.6 1025.0,958.9 1026.8,958.1 1028.6,955.5 1030.4,952.5 1032.2,949.0 1034.0,945.4 1035.7,941.6 1037.5,937.8 1039.3,934.3 1041.1,931.0 1042.9,928.2 1044.6,925.9 1046.4,924.2 1048.2,923.3 1050.0,923.0 1051.8,923.5 1053.6,924.6 1055.3,926.3 1057.1,928.7 1058.9,931.5 1060.7,934.7 1062.5,938.2 1064.2,941.8 1066.0,945.4 1067.8,949.0 1069.6,952.3 1071.4,955.3 1073.2,957.8 1074.9,959.2 1076.7,957.8 1078.5,957.1 1080.3,957.0 1082.1,957.7 1083.8,959.0 1085.6,958.0 1087.4,955.5 1089.2,952.5 1091.0,949.2 1092.8,945.6 1094.5,941.9 1096.3,938.3 1098.1,934.7 1099.9,931.5 1101.7,928.7 1103.4,926.3 1105.2,924.6 1107.0,923.4 1108.8,923.0 1110.6,923.3 1112.4,924.2 1114.1,925.7 1115.9,927.9 1117.7,930.5 1119.5,933.6 1121.3,936.9 1123.0,940.5 1124.8,944.1 1126.6,947.7 1128.4,951.0 1130.2,954.1 1132.0,956.8 1133.7,959.0 1135.5,958.3 1137.3,957.3 1139.1,957.0 1140.9,957.3 1142.6,958.3 1144.4,959.0 1146.2,956.8 1148.0,954.1 1149.8,951.0 1151.6,947.6 1153.3,944.0 1155.1,940.3 1156.9,936.8 1158.7,933.4 1160.5,930.3 1162.2,927.7 1164.0,925.6 1165.8,924.1 1167.6,923.2 1169.4,923.0 1171.2,923.5 1172.9,924.7 1174.7,926.5 1176.5,928.8 1178.3,931.7 1180.1,934.9 1181.8,938.4 1183.6,942.0 1185.4,945.7 1187.2,949.3 1189.0,952.6 1190.8,955.5 1192.5,958.0 1194.3,959.0 1196.1,957.7 1197.9,957.1 1199.7,957.1 1201.4,957.8 1203.2,959.2 1205.0,957.7 1206.8,955.1 1208.6,952.1 1210.4,948.7 1212.1,945.0 1213.9,941.3 1215.7,937.7 1217.5,934.2 1219.3,931.0 1221.0,928.2 1222.8,925.9 1224.6,924.3 1226.4,923.3 1228.2,923.0 1230.0,923.4 1231.7,924.5 1233.5,926.2 1235.3,928.5 1237.1,931.3 1238.9,934.5 1240.6,938.0 1242.4,941.6 1244.2,945.3 1246.0,948.9 1247.8,952.2 1249.6,955.2 1251.3,957.8 1253.1,959.2 1254.9,957.8 1256.7,957.1 1258.5,957.0 1260.2,957.7 1262.0,958.9 1263.8,958.2 1265.6,955.8 1267.4,952.9 1269.2,949.7 1270.9,946.2 1272.7,942.6 1274.5,939.0 1276.3,935.5 1278.1,932.2 1279.8,929.4 1281.6,926.9 1283.4,925.0 1285.2,923.7 1287.0,923.0 1288.8,923.1 1290.5,923.8 1292.3,925.2 1294.1,927.2 1295.9,929.7 1297.7,932.7 1299.4,936.0 1301.2,939.6 1303.0,943.2 1304.8,946.9 1306.6,950.4 1308.4,953.6 1310.1,956.4 1311.9,958.7 1313.7,958.5 1315.5,957.4 1317.3,957.0 1319.0,957.2 1320.8,958.2 1322.6,959.2 1324.4,957.0 1326.2,954.3 1328.0,951.1 1329.7,947.7 1331.5,944.0 1333.3,940.3 1335.1,936.7 1336.9,933.3 1338.6,930.2 1340.4,927.6 1342.2,925.5 1344.0,924.0 1345.8,923.2 1347.6,923.0 1349.3,923.6 1351.1,924.9 1352.9,926.8 1354.7,929.3 1356.5,932.3 1358.2,935.7 1360.0,939.3 1361.8,943.0 1363.6,946.8 1365.4,950.3 1367.2,953.6 1368.9,956.5 1370.7,958.8 1372.5,958.4 1374.3,957.4 1376.1,957.0 1377.8,957.3 1379.6,958.3 1381.4,959.1 1383.2,956.9 1385.0,954.1 1386.8,951.0 1388.5,947.6 1390.3,944.0 1392.1,940.4 1393.9,936.8 1395.7,933.4 1397.4,930.4 1399.2,927.7 1401.0,925.6 1402.8,924.1 1404.6,923.2 1406.4,923.0 1408.1,923.5 1409.9,924.6 1411.7,926.3 1413.5,928.5 1415.3,931.2 1417.0,934.3 1418.8,937.7 1420.6,941.2 1422.4,944.8 1424.2,948.3 1425.9,951.6 1427.7,954.6 1429.5,957.2 1431.3,959.2 1433.1,958.2 1434.9,957.3 1436.6,957.0 1438.4,957.4 1440.2,958.5 1442.0,958.8 1443.8,956.5 1445.5,953.6 1447.3,950.4 1449.1,946.9 1450.9,943.2 1452.7,939.6 1454.5,936.0 1456.2,932.6 1458.0,929.6 1459.8,927.1 1461.6,925.1 1463.4,923.8 1465.1,923.0 1466.9,923.1 1468.7,923.8 1470.5,925.2 1472.3,927.3 1474.1,929.9 1475.8,933.0 1477.6,936.4 1479.4,940.0 1481.2,943.7 1483.0,947.4 1484.7,950.9 1486.5,954.1 1488.3,956.9 1490.1,959.2 1491.9,958.2 1493.7,957.2 1495.4,957.0 1497.2,957.4 1499.0,958.6 1500.8,958.7 1502.6,956.3 1504.3,953.5 1506.1,950.2 1507.9,946.7 1509.7,943.0 1511.5,939.4 1513.3,935.8 1515.0,932.4 1516.8,929.5 1518.6,927.0 1520.4,925.0 1522.2,923.7 1523.9,923.0 1525.7,923.1 1527.5,923.8 1529.3,925.2 1531.1,927.2 1532.9,929.7 1534.6,932.7 1536.4,936.0 1538.2,939.6 1540.0,943.2 1541.8,946.8 1543.5,950.3 1545.3,953.5 1547.1,956.3 1548.9,958.6 1550.7,958.6 1552.5,957.5 1554.2,957.0 1556.0,957.2 1557.8,958.1 1559.6,959.2 1561.4,957.3 1563.1,954.6 1564.9,951.6 1566.7,948.2 1568.5,944.6 1570.3,940.9 1572.1,937.3 1573.8,933.9 1575.6,930.8 1577.4,928.1 1579.2,925.9 1581.0,924.3 1582.7,923.3 1584.5,923.0 1586.3,923.4 1588.1,924.5 1589.9,926.2 1591.7,928.4 1593.4,931.2 1595.2,934.4 1597.0,937.8 1598.8,941.5 1600.6,945.1 1602.3,948.7 1604.1,952.0 1605.9,955.0 1607.7,957.6 1609.5,959.2 1611.3,957.9 1613.0,957.1 1614.8,957.0 1616.6,957.6 1618.4,958.9 1620.2,958.2 1621.9,955.7 1623.7,952.7 1625.5,949.3 1627.3,945.8 1629.1,942.0 1630.9,938.3 1632.6,934.8 1634.4,931.5 1636.2,928.7 1638.0,926.3 1639.8,924.5 1641.5,923.4 1643.3,923.0 1645.1,923.3 1646.9,924.2 1648.7,925.8 1650.5,928.0 1652.2,930.6 1654.0,933.7 1655.8,937.1 1657.6,940.6 1659.4,944.3 1661.1,947.9 1662.9,951.2 1664.7,954.3 1666.5,957.0 1668.3,959.2 1670.1,958.2 1671.8,957.3 1673.6,957.0 1675.4,957.4 1677.2,958.5 1679.0,958.8 1680.7,956.5 1682.5,953.7 1684.3,950.5 1686.1,947.0 1687.9,943.3 1689.7,939.6 1691.4,936.0 1693.2,932.7 1695.0,929.7 1696.8,927.1 1698.6,925.1 1700.3,923.8 1702.1,923.0 1703.9,923.1 1705.7,923.8 1707.5,925.1 1709.3,927.0 1711.0,929.5 1712.8,932.4 1714.6,935.7 1716.4,939.2 1718.2,942.8 1719.9,946.5 1721.7,949.9 1723.5,953.2 1725.3,956.0 1727.1,958.4 1728.9,958.8 1730.6,957.6 1732.4,957.0 1734.2,957.1 1736.0,958.0 1737.8,959.2 1739.5,957.5 1741.3,954.8 1743.1,951.8 1744.9,948.4 1746.7,944.7 1748.5,941.0 1750.2,937.4 1752.0,933.9 1753.8,930.8 1755.6,928.1 1757.4,925.8 1759.1,924.2 1760.9,923.3 1762.7,923.0 1764.5,923.4 1766.3,924.5 1768.1,926.3 1769.8,928.6 1771.6,931.4 1773.4,934.7 1775.2,938.2 1777.0,941.8 1778.7,945.5 1780.5,949.1 1782.3,952.4 1784.1,955.4 1785.9,957.9 1787.7,959.1 1789.4,957.8 1791.2,957.1 1793.0,957.1 1794.8,957.7 1796.6,959.1 1798.3,958.0 1800.1,955.5 1801.9,952.5 1803.7,949.3 1805.5,945.7 1807.3,942.1 1809.0,938.5 1810.8,935.0 1812.6,931.8 1814.4,928.9 1816.2,926.6 1817.9,924.7 1819.7,923.6 1821.5,923.0 1823.3,923.1 1825.1,923.9 1826.9,925.4 1828.6,927.5 1830.4,930.1 1832.2,933.2 1834.0,936.7 1835.8,940.3 1837.5,944.1 1839.3,947.8 1841.1,951.3 1842.9,954.4 1844.7,957.2 1846.5,959.2 1848.2,958.1 1850.0,957.2 1851.8,957.0 1853.6,957.9 1855.4,957.9 1857.1,951.9 1858.9,945.8 1860.7,939.7 1862.5,935.8 1864.3,933.6 1866.1,932.7 1867.8,931.4 1869.6,929.4 1871.4,925.8 1873.2,922.3 1875.0,921.0 1876.7,922.3 1878.5,925.7 1880.3,928.8 1882.1,930.6 1883.9,930.7 1885.7,930.8 1887.4,932.2 1889.2,934.8 1891.0,938.8 1892.8,943.2"/>
<polyline fill="none" stroke="#009600" stroke-width="2.0" stroke-linejoin="round" points="70.0,959.5 71.8,958.8 73.6,951.2 75.3,935.6 77.1,912.7 78.9,883.1 80.7,847.9 82.5,808.5 84.3,766.2 86.0,720.6 87.8,670.5 89.6,623.3 91.4,581.2 93.2,546.5 95.1,518.9 95.5,514.7 95.9,511.1 96.3,508.0 96.7,505.4 97.1,503.4 97.5,502.0 97.9,501.1 98.3,500.8 98.7,500.9 99.1,501.3 99.5,502.1 99.9,503.2 100.3,504.8 100.7,506.6 101.1,508.9 101.5,511.5 102.1,515.8 103.9,533.7 105.6,558.0 107.4,588.0 109.2,622.8 111.0,661.3 112.8,702.5 114.5,745.0 116.3,786.5 118.1,826.9 119.9,865.2 121.7,900.1 123.5,935.5 125.2,956.7 127.0,932.1 128.8,925.8 130.6,930.5 132.4,942.3 134.1,952.1 135.9,932.7 137.7,901.8 139.5,866.1 141.3,826.7 143.1,784.7 144.8,741.2 146.6,694.4 148.4,648.9 150.2,606.5 152.0,568.5 153.7,536.2 155.5,510.8 156.8,497.4 157.2,494.0 157.6,491.1 158.0,488.6 158.4,486.5 158.8,484.8 159.2,483.6 159.6,482.8 160.0,482.5 160.4,483.0 160.8,484.0 161.2,485.4 161.6,487.4 162.0,489.9 162.4,492.8 162.8,496.2 163.2,500.1 164.4,515.0 166.2,543.6 168.0,579.6 169.8,621.6 171.6,668.0 173.3,717.0 175.1,767.8 176.9,818.2 178.7,865.2 180.5,906.9 182.3,935.3 184.0,952.6 185.8,946.6 187.6,935.6 189.4,929.8 191.2,929.0 192.9,940.2 194.7,947.1 196.5,928.2 198.3,890.1 200.1,845.8 201.9,797.2 203.6,746.8 205.4,699.5 207.2,654.4 209.0,613.3 210.8,577.9 212.5,549.6 214.3,529.7 214.7,526.4 215.1,523.5 215.5,521.1 215.9,519.2 216.3,517.8 216.7,516.8 217.1,516.3 217.5,516.3 217.9,516.3 218.3,516.6 218.7,517.3 219.1,518.3 219.5,519.7 219.9,521.5 220.3,523.6 220.7,526.0 221.5,531.6 223.2,549.3 225.0,573.2 226.8,602.5 228.6,636.3 230.4,673.7 232.1,713.5 233.9,755.5 235.7,803.9 237.5,850.3 239.3,892.6 241.1,929.7 242.8,956.1 244.6,938.1 246.4,928.4 248.2,930.2 250.0,939.2 251.7,952.1 253.5,939.8 255.3,910.1 257.1,875.0 258.9,835.6 260.7,793.1 262.4,748.9 264.2,701.1 266.0,654.2 267.8,610.3 269.6,571.1 271.3,538.1 273.1,512.5 274.0,502.9 274.4,499.2 274.8,496.0 275.2,493.2 275.6,490.9 276.0,489.0 276.4,487.7 276.8,486.7 277.2,486.3 277.6,486.7 278.0,487.6 278.4,488.9 278.8,490.7 279.2,492.9 279.6,495.5 280.0,498.5 280.4,501.9 282.0,520.1 283.8,547.1 285.6,580.6 287.4,619.5 289.2,662.6 290.9,708.4 292.7,754.9 294.5,799.1 296.3,841.7 298.1,881.2 299.9,916.7 301.6,946.9 303.4,949.0 305.2,930.6 307.0,920.5 308.8,917.8 310.5,924.8 312.3,939.9 314.1,946.1 315.9,926.3 317.7,890.6 319.5,850.3 321.2,806.8 323.0,761.8 324.8,716.9 326.6,673.6 328.4,633.4 330.1,597.8 331.9,567.9 333.7,544.8 335.0,532.8 335.4,529.9 335.8,527.4 336.2,525.4 336.6,523.7 337.0,522.5 337.4,521.7 337.8,521.3 338.2,521.3 338.6,521.4 339.0,522.0 339.4,523.1 339.8,524.7 340.2,526.7 340.6,529.2 341.0,532.2 341.4,535.6 342.6,548.7 344.4,574.8 346.2,608.2 348.0,647.5 349.7,691.1 351.5,737.2 353.3,783.9 355.1,829.3 356.9,871.5 358.7,908.8 360.4,939.8 362.2,953.9 364.0,941.4 365.8,936.0 367.6,938.7 369.3,955.8 371.1,949.8 372.9,923.0 374.7,889.7 376.5,851.0 378.3,808.3 380.0,763.2 381.8,717.4 383.6,672.4 385.4,630.1 387.2,591.9 388.9,559.3 390.7,533.5 392.0,519.7 392.4,516.3 392.8,513.3 393.2,510.7 393.6,508.6 394.0,506.9 394.4,505.6 394.8,504.8 395.2,504.5 395.6,504.7 396.0,505.3 396.4,506.3 396.8,507.8 397.2,509.6 397.6,511.8 398.0,514.5 398.4,517.5 399.6,529.2 401.4,552.3 403.2,582.0 405.0,617.4 406.8,657.2 408.5,700.3 410.3,745.2 412.1,790.4 413.9,834.4 415.7,875.9 417.5,913.5 419.2,945.9 421.0,948.0 422.8,928.0 424.6,916.8 426.4,913.6 428.1,920.3 429.9,934.7 431.7,950.0 433.5,934.1 435.3,899.9 437.1,861.0 438.8,818.7 440.6,774.4 442.4,729.5 444.2,685.5 446.0,643.7 447.7,605.6 449.5,572.3 451.3,544.9 453.1,524.2 453.8,518.0 454.2,515.0 454.6,512.5 455.0,510.3 455.4,508.5 455.8,507.1 456.2,506.1 456.6,505.5 457.0,505.3 457.4,505.6 457.8,506.4 458.2,507.7 458.6,509.4 459.0,511.6 459.4,514.2 459.8,517.3 460.2,520.8 462.0,541.9 463.8,570.7 465.6,606.1 467.3,646.7 469.1,691.0 470.9,737.3 472.7,783.7 474.5,828.6 476.3,870.1 478.0,906.8 479.8,937.2 481.6,954.8 483.4,944.1 485.2,938.0 486.9,940.1 488.7,956.8 490.5,949.3 492.3,922.6 494.1,889.2 495.9,850.4 497.6,807.6 499.4,762.7 501.2,717.2 503.0,672.9 504.8,631.6 506.5,594.8 508.3,564.0 510.1,540.4 511.0,531.5 511.4,528.3 511.8,525.4 512.2,523.0 512.6,521.1 513.0,519.6 513.4,518.5 513.8,517.9 514.2,517.8 514.6,517.9 515.0,518.3 515.4,519.2 515.8,520.5 516.2,522.2 516.6,524.3 517.0,526.8 517.4,529.8 519.0,545.5 520.8,569.7 522.6,600.5 524.4,636.8 526.1,677.3 527.9,720.7 529.7,765.4 531.5,810.0 533.3,852.8 535.0,892.5 536.8,927.6 538.6,945.1 540.4,939.8 542.2,925.1 544.0,918.4 545.7,921.5 547.5,932.9 549.3,955.8 551.1,940.0 552.9,906.8 554.6,868.2 556.4,825.5 558.2,780.2 560.0,733.8 561.8,687.9 563.6,644.0 565.3,603.6 567.1,568.2 568.9,538.8 570.7,516.5 571.3,510.6 571.7,507.3 572.1,504.4 572.5,501.9 572.9,499.8 573.3,498.2 573.7,497.0 574.1,496.2 574.5,495.8 574.9,496.1 575.3,496.9 575.7,498.1 576.1,499.7 576.5,501.8 576.9,504.2 577.3,507.1 577.7,510.4 579.6,531.2 581.4,558.2 583.2,591.5 584.9,629.9 586.7,672.1 588.5,716.6 590.3,761.9 592.1,806.5 593.8,848.8 595.6,887.5 597.4,921.2 599.2,948.9 601.0,954.8 602.8,936.5 604.5,931.5 606.3,934.7 608.1,946.1 609.9,956.8 611.7,926.8 613.4,893.8 615.2,855.8 617.0,814.1 618.8,770.1 620.6,725.5 622.4,681.8 624.1,640.7 625.9,603.4 627.7,571.5 629.5,545.9 631.3,527.4 631.7,524.4 632.1,521.8 632.5,519.6 632.9,517.9 633.3,516.5 633.7,515.6 634.1,515.1 634.5,515.0 634.9,515.1 635.3,515.7 635.7,516.7 636.1,518.2 636.5,520.2 636.9,522.6 637.3,525.4 637.7,528.7 638.4,535.4 640.2,558.3 642.0,588.6 643.7,625.1 645.5,666.5 647.3,711.2 649.1,757.4 650.9,803.4 652.6,847.3 654.4,887.5 656.2,922.4 658.0,951.9 659.8,947.9 661.6,936.1 663.3,933.1 665.1,938.8 666.9,950.9 668.7,945.2 670.5,916.8 672.2,882.4 674.0,843.2 675.8,800.4 677.6,755.7 679.4,710.4 681.2,666.2 682.9,624.7 684.7,587.2 686.5,555.1 688.3,529.5 689.8,513.5 690.2,510.2 690.6,507.3 691.0,504.9 691.4,502.9 691.8,501.3 692.2,500.1 692.6,499.3 693.0,499.0 693.4,499.2 693.8,499.9 694.2,501.0 694.6,502.5 695.0,504.4 695.4,506.7 695.8,509.4 696.2,512.6 697.2,522.0 699.0,544.8 700.8,574.4 702.5,609.7 704.3,649.6 706.1,692.7 707.9,737.7 709.7,782.9 711.4,826.8 713.2,868.1 715.0,905.2 716.8,937.0 718.6,956.8 720.4,938.7 722.1,928.5 723.9,926.3 725.7,933.9 727.5,946.1 729.3,946.8 731.0,917.0 732.8,881.4 734.6,841.2 736.4,797.9 738.2,752.9 740.0,707.8 741.7,664.1 743.5,623.4 745.3,586.9 747.1,556.0 748.9,531.7 750.3,517.5 750.7,514.4 751.1,511.8 751.5,509.5 751.9,507.7 752.3,506.3 752.7,505.3 753.1,504.7 753.5,504.5 753.9,504.7 754.3,505.4 754.7,506.5 755.1,508.1 755.5,510.1 755.9,512.6 756.3,515.5 756.7,518.8 757.8,529.8 759.6,554.3 761.3,585.7 763.1,623.0 764.9,664.6 766.7,709.1 768.5,754.8 770.2,799.9 772.0,842.7 773.8,881.8 775.6,915.6 777.4,942.9 779.2,951.9 780.9,944.9 782.7,941.9 784.5,946.8 786.3,950.6 788.1,937.4 789.8,908.8 791.6,874.0 793.4,834.3 795.2,791.2 797.0,746.2 798.8,701.0 800.5,657.3 802.3,616.7 804.1,580.6 805.9,550.5 807.7,527.4 808.5,519.3 808.9,516.0 809.3,513.2 809.7,510.8 810.1,508.8 810.5,507.3 810.9,506.2 811.3,505.5 811.7,505.3 812.1,505.5 812.5,506.1 812.9,507.1 813.3,508.5 813.7,510.4 814.1,512.6 814.5,515.3 814.9,518.4 816.6,535.5 818.4,560.9 820.1,592.7 821.9,629.9 823.7,671.3 825.5,715.4 827.3,760.7 829.0,805.6 830.8,848.5 832.6,888.1 834.4,922.8 836.2,946.1 838.0,945.8 839.7,932.0 841.5,926.3 843.3,930.0 845.1,942.3 846.9,956.8 848.6,928.8 850.4,894.7 852.2,855.5 854.0,812.4 855.8,767.0 857.6,720.9 859.3,675.7 861.1,632.9 862.9,594.1 864.7,560.6 866.5,533.6 868.3,513.6 868.7,510.3 869.1,507.5 869.5,505.1 869.9,503.1 870.3,501.6 870.7,500.4 871.1,499.8 871.5,499.5 871.9,499.8 872.3,500.5 872.7,501.6 873.1,503.1 873.5,505.0 873.9,507.4 874.3,510.1 874.7,513.2 875.4,519.4 877.2,540.8 878.9,569.1 880.7,603.1 882.5,641.8 884.3,683.9 886.1,727.9 887.8,772.3 889.6,815.6 891.4,856.5 893.2,893.4 895.0,925.1 896.8,950.6 898.5,949.8 900.3,938.9 902.1,936.0 903.9,941.4 905.7,949.4 907.4,941.1 909.2,911.3 911.0,875.3 912.8,834.4 914.6,790.1 916.4,744.3 918.1,698.4 919.9,654.4 921.7,613.9 923.5,578.4 925.3,549.3 927.0,527.6 927.5,523.3 927.9,520.0 928.3,517.2 928.7,514.8 929.1,512.8 929.5,511.3 929.9,510.3 930.3,509.7 930.7,509.5 931.1,509.7 931.5,510.2 931.9,511.3 932.3,512.7 932.7,514.6 933.1,516.8 933.5,519.5 933.9,522.7 934.2,525.0 936.0,544.9 937.7,572.0 939.5,605.5 941.3,644.1 943.1,686.4 944.9,731.0 946.6,776.2 948.4,820.4 950.2,862.2 952.0,899.8 953.8,932.1 955.6,956.8 957.3,942.9 959.1,932.8 960.9,930.8 962.7,938.3 964.5,948.0 966.2,942.7 968.0,912.9 969.8,877.3 971.6,837.0 973.4,793.5 975.2,748.3 976.9,702.9 978.7,659.0 980.5,618.0 982.3,581.5 984.1,550.6 985.8,526.5 987.0,514.9 987.4,511.7 987.8,508.9 988.2,506.5 988.6,504.5 989.0,502.9 989.4,501.8 989.8,501.1 990.2,500.8 990.6,501.1 991.0,501.8 991.4,502.8 991.8,504.3 992.2,506.2 992.6,508.5 993.0,511.2 993.4,514.3 994.8,527.6 996.5,551.3 998.3,581.5 1000.1,617.1 1001.9,656.9 1003.7,699.7 1005.4,743.9 1007.2,788.2 1009.0,831.1 1010.8,871.1 1012.6,907.0 1014.4,937.6 1016.1,956.8 1017.9,940.1 1019.7,930.7 1021.5,928.8 1023.3,937.0 1025.0,954.9 1026.8,940.9 1028.6,909.1 1030.4,871.3 1032.2,829.0 1034.0,783.7 1035.7,737.2 1037.5,691.2 1039.3,647.4 1041.1,607.6 1042.9,573.1 1044.6,545.4 1046.5,524.7 1046.9,521.4 1047.3,518.5 1047.7,516.1 1048.1,514.2 1048.5,512.6 1048.9,511.6 1049.3,511.0 1049.7,510.8 1050.1,511.0 1050.5,511.6 1050.9,512.6 1051.3,514.0 1051.7,515.8 1052.1,518.1 1052.5,520.8 1052.9,523.9 1053.6,529.8 1055.3,551.0 1057.1,579.2 1058.9,613.3 1060.7,652.2 1062.5,694.4 1064.2,738.6 1066.0,783.0 1067.8,826.2 1069.6,866.6 1071.4,902.8 1073.2,933.5 1074.9,956.8 1076.7,944.6 1078.5,935.9 1080.3,934.7 1082.1,943.1 1083.8,954.9 1085.6,936.2 1087.4,905.6 1089.2,869.2 1091.0,828.3 1092.8,784.3 1094.5,738.9 1096.3,693.7 1098.1,650.2 1099.9,610.2 1101.7,574.9 1103.4,545.7 1105.2,523.7 1105.8,518.3 1106.2,515.0 1106.6,512.1 1107.0,509.7 1107.4,507.7 1107.8,506.1 1108.2,505.0 1108.6,504.3 1109.0,504.0 1109.4,504.2 1109.8,504.9 1110.2,506.0 1110.6,507.4 1111.0,509.4 1111.4,511.7 1111.8,514.4 1112.2,517.5 1114.1,538.3 1115.9,564.9 1117.7,597.9 1119.5,636.0 1121.3,678.0 1123.0,722.5 1124.8,767.9 1126.6,812.7 1128.4,855.2 1130.2,894.2 1132.0,928.1 1133.7,948.0 1135.5,942.4 1137.3,929.5 1139.1,924.9 1140.9,929.4 1142.6,942.2 1144.4,950.9 1146.2,928.0 1148.0,893.9 1149.8,854.7 1151.6,811.9 1153.3,767.0 1155.1,721.5 1156.9,677.0 1158.7,635.1 1160.5,597.2 1162.2,564.7 1164.0,538.6 1165.8,519.9 1166.2,516.8 1166.6,514.0 1167.0,511.7 1167.4,509.8 1167.8,508.4 1168.2,507.3 1168.6,506.7 1169.0,506.5 1169.4,506.7 1169.8,507.4 1170.2,508.5 1170.6,510.0 1171.0,512.0 1171.4,514.3 1171.8,517.1 1172.2,520.3 1172.9,527.2 1174.7,549.4 1176.5,578.6 1178.3,613.6 1180.1,653.4 1181.8,696.4 1183.6,741.1 1185.4,785.9 1187.2,829.3 1189.0,869.7 1190.8,905.7 1192.5,936.0 1194.3,954.9 1196.1,943.6 1197.9,935.1 1199.7,936.3 1201.4,945.0 1203.2,956.8 1205.0,932.2 1206.8,900.7 1208.6,863.5 1210.4,822.1 1212.1,777.9 1213.9,732.6 1215.7,687.7 1217.5,645.0 1219.3,606.0 1221.0,572.1 1222.8,544.6 1224.8,522.8 1225.2,519.6 1225.6,516.8 1226.0,514.4 1226.4,512.4 1226.8,510.9 1227.2,509.8 1227.6,509.2 1228.0,509.0 1228.4,509.2 1228.8,509.8 1229.2,510.8 1229.6,512.3 1230.0,514.1 1230.4,516.4 1230.8,519.2 1231.2,522.3 1231.7,527.1 1233.5,548.1 1235.3,576.3 1237.1,610.6 1238.9,649.9 1240.6,692.7 1242.4,737.5 1244.2,782.8 1246.0,826.9 1247.8,868.3 1249.6,905.6 1251.3,937.3 1253.1,953.9 1254.9,939.1 1256.7,929.7 1258.5,928.2 1260.2,936.8 1262.0,954.9 1263.8,942.9 1265.6,912.8 1267.4,876.9 1269.2,836.6 1270.9,793.3 1272.7,748.3 1274.5,703.3 1276.3,659.8 1278.1,619.2 1279.8,583.1 1281.6,552.6 1283.4,528.8 1284.6,517.0 1285.0,513.9 1285.4,511.1 1285.8,508.8 1286.2,506.8 1286.6,505.3 1287.0,504.2 1287.4,503.5 1287.8,503.3 1288.2,503.6 1288.6,504.3 1289.0,505.4 1289.4,507.0 1289.8,509.0 1290.2,511.4 1290.6,514.2 1291.0,517.5 1292.3,531.0 1294.1,555.9 1295.9,587.5 1297.7,624.7 1299.4,666.2 1301.2,710.4 1303.0,755.9 1304.8,801.1 1306.6,844.2 1308.4,883.9 1310.1,918.7 1311.9,947.3 1313.7,948.0 1315.5,936.5 1317.3,931.1 1319.0,934.4 1320.8,946.1 1322.6,952.9 1324.4,926.1 1326.2,892.6 1328.0,853.9 1329.7,811.5 1331.5,766.8 1333.3,721.5 1335.1,677.2 1336.9,635.6 1338.6,597.9 1340.4,565.8 1342.2,540.2 1343.8,523.7 1344.2,520.5 1344.6,517.8 1345.0,515.5 1345.4,513.6 1345.8,512.1 1346.2,511.1 1346.6,510.5 1347.0,510.3 1347.4,510.5 1347.8,511.1 1348.2,512.1 1348.6,513.6 1349.0,515.6 1349.4,518.0 1349.8,520.8 1350.2,524.0 1351.1,532.9 1352.9,556.3 1354.7,586.8 1356.5,623.3 1358.2,664.4 1360.0,708.6 1361.8,754.4 1363.6,799.9 1365.4,843.5 1367.2,883.6 1368.9,918.8 1370.7,947.6 1372.5,950.0 1374.3,936.7 1376.1,932.1 1377.8,936.0 1379.6,948.2 1381.4,952.9 1383.2,923.5 1385.0,890.1 1386.8,851.6 1388.5,809.3 1390.3,764.8 1392.1,719.6 1393.9,675.3 1395.7,633.4 1397.4,595.3 1399.2,562.5 1401.0,536.1 1402.8,516.8 1403.2,513.6 1403.6,510.8 1404.0,508.4 1404.4,506.4 1404.8,504.9 1405.2,503.8 1405.6,503.1 1406.0,502.8 1406.4,503.0 1406.8,503.7 1407.2,504.7 1407.6,506.2 1408.0,508.1 1408.4,510.4 1408.8,513.0 1409.2,516.1 1409.9,522.6 1411.7,543.8 1413.5,571.9 1415.3,605.8 1417.0,644.3 1418.8,686.4 1420.6,730.4 1422.4,774.9 1424.2,818.5 1425.9,859.7 1427.7,897.0 1429.5,929.4 1431.3,956.4 1433.1,944.3 1434.9,932.7 1436.6,929.2 1438.4,934.4 1440.2,948.1 1442.0,949.0 1443.8,920.3 1445.5,885.2 1447.3,845.2 1449.1,801.8 1450.9,756.5 1452.7,710.9 1454.5,666.7 1456.2,625.4 1458.0,588.6 1459.8,557.5 1461.6,533.2 1462.8,521.1 1463.2,517.9 1463.6,515.1 1464.0,512.8 1464.4,510.8 1464.8,509.4 1465.2,508.3 1465.6,507.7 1466.0,507.5 1466.4,507.7 1466.8,508.4 1467.2,509.5 1467.6,511.0 1468.0,513.0 1468.4,515.4 1468.8,518.2 1469.2,521.5 1470.5,534.8 1472.3,559.9 1474.1,591.8 1475.8,629.3 1477.6,671.2 1479.4,715.7 1481.2,761.4 1483.0,806.5 1484.7,849.4 1486.5,888.4 1488.3,922.3 1490.1,950.6 1491.9,949.5 1493.7,937.8 1495.4,934.7 1497.2,940.0 1499.0,949.4 1500.8,943.7 1502.6,915.0 1504.3,880.2 1506.1,840.6 1507.9,797.5 1509.7,752.5 1511.5,707.2 1513.3,663.3 1515.0,622.3 1516.8,585.7 1518.6,554.9 1520.4,530.9 1521.5,519.7 1521.9,516.5 1522.3,513.7 1522.7,511.3 1523.1,509.3 1523.5,507.8 1523.9,506.7 1524.3,506.0 1524.7,505.8 1525.1,506.0 1525.5,506.6 1525.9,507.7 1526.3,509.1 1526.7,511.0 1527.1,513.3 1527.5,516.1 1527.9,519.2 1529.3,533.2 1531.1,557.7 1532.9,588.8 1534.6,625.5 1536.4,666.5 1538.2,710.3 1540.0,755.4 1541.8,800.3 1543.5,843.3 1545.3,883.0 1547.1,918.0 1548.9,947.0 1550.7,950.9 1552.5,935.5 1554.2,929.2 1556.0,932.0 1557.8,943.1 1559.6,956.8 1561.4,930.2 1563.1,897.3 1564.9,859.1 1566.7,816.9 1568.5,772.3 1570.3,726.8 1572.1,682.0 1573.8,639.5 1575.6,600.7 1577.4,567.1 1579.2,539.8 1581.0,519.8 1581.2,517.7 1581.6,514.5 1582.0,511.8 1582.4,509.4 1582.8,507.5 1583.2,506.0 1583.6,504.9 1584.0,504.2 1584.4,504.0 1584.8,504.2 1585.2,504.9 1585.6,506.0 1586.0,507.5 1586.4,509.5 1586.8,511.8 1587.2,514.6 1587.6,517.8 1588.1,522.3 1589.9,543.5 1591.7,571.7 1593.4,606.1 1595.2,645.3 1597.0,688.0 1598.8,732.7 1600.6,777.8 1602.3,821.7 1604.1,863.0 1605.9,900.0 1607.7,931.6 1609.5,955.8 1611.3,944.7 1613.0,935.2 1614.8,933.5 1616.6,941.3 1618.4,950.9 1620.2,938.4 1621.9,907.8 1623.7,871.3 1625.5,830.3 1627.3,786.2 1629.1,740.7 1630.9,695.5 1632.6,652.0 1634.4,612.1 1636.2,577.0 1638.0,548.1 1639.8,526.5 1640.3,521.6 1640.7,518.3 1641.1,515.5 1641.5,513.2 1641.9,511.2 1642.3,509.7 1642.7,508.6 1643.1,508.0 1643.5,507.8 1643.9,508.0 1644.3,508.6 1644.7,509.6 1645.1,511.0 1645.5,512.9 1645.9,515.2 1646.3,517.8 1646.7,520.9 1648.7,541.8 1650.5,568.2 1652.2,600.9 1654.0,638.6 1655.8,680.2 1657.6,724.1 1659.4,768.9 1661.1,813.0 1662.9,854.7 1664.7,892.8 1666.5,925.9 1668.3,951.9 1670.1,946.5 1671.8,934.5 1673.6,930.8 1675.4,935.7 1677.2,949.0 1679.0,948.5 1680.7,919.8 1682.5,884.9 1684.3,845.0 1686.1,801.6 1687.9,756.2 1689.7,710.4 1691.4,665.9 1693.2,624.2 1695.0,586.9 1696.8,555.3 1698.6,530.6 1699.8,517.9 1700.2,514.7 1700.6,511.8 1701.0,509.4 1701.4,507.4 1701.8,505.9 1702.2,504.7 1702.6,504.0 1703.0,503.8 1703.4,504.0 1703.8,504.7 1704.2,505.8 1704.6,507.3 1705.0,509.2 1705.4,511.6 1705.8,514.3 1706.2,517.5 1707.5,530.2 1709.3,554.3 1711.0,585.1 1712.8,621.5 1714.6,662.1 1716.4,705.7 1718.2,750.7 1719.9,795.5 1721.7,838.6 1723.5,878.4 1725.3,913.7 1727.1,943.2 1728.9,955.8 1730.6,938.1 1732.4,930.8 1734.2,932.8 1736.0,943.0 1737.8,954.9 1739.5,931.8 1741.3,899.3 1743.1,861.3 1744.9,819.3 1746.7,774.8 1748.5,729.2 1750.2,684.4 1752.0,641.8 1753.8,603.1 1755.6,569.6 1757.4,542.5 1759.3,521.4 1759.7,518.2 1760.1,515.4 1760.5,513.1 1760.9,511.2 1761.3,509.7 1761.7,508.6 1762.1,508.0 1762.5,507.8 1762.9,508.0 1763.3,508.6 1763.7,509.7 1764.1,511.2 1764.5,513.1 1764.9,515.4 1765.3,518.2 1765.7,521.4 1766.3,526.6 1768.1,548.0 1769.8,576.6 1771.6,611.2 1773.4,650.7 1775.2,693.6 1777.0,738.4 1778.7,783.6 1780.5,827.4 1782.3,868.4 1784.1,905.0 1785.9,936.0 1787.7,956.4 1789.4,942.1 1791.2,932.7 1793.0,933.7 1794.8,942.1 1796.6,955.8 1798.3,936.7 1800.1,906.1 1801.9,870.0 1803.7,829.5 1805.5,786.1 1807.3,741.2 1809.0,696.6 1810.8,653.6 1812.6,613.9 1814.4,578.7 1816.2,549.4 1817.9,527.0 1818.8,518.9 1819.2,515.8 1819.6,513.0 1820.0,510.7 1820.4,508.8 1820.8,507.3 1821.2,506.2 1821.6,505.5 1822.0,505.3 1822.4,505.6 1822.8,506.3 1823.2,507.5 1823.6,509.1 1824.0,511.1 1824.4,513.6 1824.8,516.5 1825.2,519.8 1826.9,538.0 1828.6,564.8 1830.4,598.2 1832.2,637.0 1834.0,679.8 1835.8,725.0 1837.5,771.0 1839.3,816.1 1841.1,858.8 1842.9,897.3 1844.7,930.5 1846.5,949.4 1848.2,943.1 1850.0,932.5 1851.8,930.2 1853.6,939.3 1855.4,937.9 1857.1,887.6 1858.9,825.7 1860.7,757.5 1862.5,702.5 1864.3,651.5 1866.1,605.7 1867.8,567.3 1869.6,538.2 1871.4,519.9 1873.2,513.3 1875.0,518.7 1876.7,528.2 1878.5,541.7 1880.3,558.0 1882.1,579.4 1883.9,602.0 1885.7,620.3 1887.4,628.3 1889.2,639.8 1891.0,681.1 1892.8,763.2"/>
<path d="M69.7,959.5 L69.7,66.9 Q69.7,65.4 71.2,65.4 L2028.8,65.4 Q2030.0,65.4 2030.0,66.60000000000001 L2030.0,959.5" fill="none" stroke="#5a5a5a" stroke-width="1.3"/>
<line x1="69.10000000000001" y1="959.5" x2="2030.6" y2="959.5" stroke="#2c2c2c" stroke-width="1.1"/>
<rect x="1647.1" y="96.6" width="197.6" height="74.9" fill="#fff" stroke="#333" stroke-width="1.8" rx="0.8"/>
<line x1="1727.3" y1="97" x2="1727.3" y2="171.5" stroke="#555" stroke-width="1.1"/>
<line x1="1647.5" y1="122.2" x2="1844.5" y2="122.2" stroke="#777" stroke-width="1.2"/>
<line x1="1647.5" y1="147.2" x2="1844.5" y2="147.2" stroke="#555" stroke-width="1.1"/>
<line x1="1657.2" y1="109.0" x2="1716.9" y2="109.0" stroke="#ff0000" stroke-width="2"/>
<line x1="1657.2" y1="134.4" x2="1716.9" y2="134.4" stroke="#0000ff" stroke-width="2"/>
<line x1="1657.2" y1="159.7" x2="1716.9" y2="159.7" stroke="#009600" stroke-width="2"/>
<defs><filter id="gs" x="0" y="0" width="100%" height="100%" filterUnits="userSpaceOnUse" color-interpolation-filters="sRGB"><feOffset dx="0" dy="0"/></filter></defs>
<g filter="url(#gs)"><text x="1732" y="113.5">1_(676410X+)</text><text x="1732" y="138.6">2_(676410Y+)</text><text x="1732" y="163.8">3_(676410Z+)</text><text x="66.6" y="77.6" text-anchor="end">0.039</text><text x="66.6" y="163.1" text-anchor="end">0.035</text><text x="66.6" y="277.7" text-anchor="end">0.03</text><text x="66.6" y="392.2" text-anchor="end">0.025</text><text x="66.6" y="506.8" text-anchor="end">0.02</text><text x="66.6" y="621.4" text-anchor="end">0.015</text><text x="66.6" y="736.0" text-anchor="end">0.01</text><text x="66.6" y="850.5" text-anchor="end">0.005</text><text x="66.6" y="960.4" text-anchor="end">0</text><text x="69.8" y="976.2" text-anchor="start">0</text><text x="426.3" y="976.2" text-anchor="middle">2</text><text x="782.8" y="976.2" text-anchor="middle">4</text><text x="1139.3" y="976.2" text-anchor="middle">6</text><text x="1495.6" y="976.2" text-anchor="middle">8</text><text x="1852.1" y="976.2" text-anchor="middle">10</text><text x="2031.0" y="976.2" text-anchor="end">11</text><text x="1015.6" y="63.1" text-anchor="middle">Time</text><text x="1050.8" y="993.5" text-anchor="middle">Time(s)</text><text x="72" y="79.9">Magnitude</text><text x="2031" y="1016.7" text-anchor="end">Page 1 of 1</text><text transform="translate(14.3,513.2) rotate(-90)" text-anchor="middle">Displacement(mm)</text></g>
</svg></body></html>
